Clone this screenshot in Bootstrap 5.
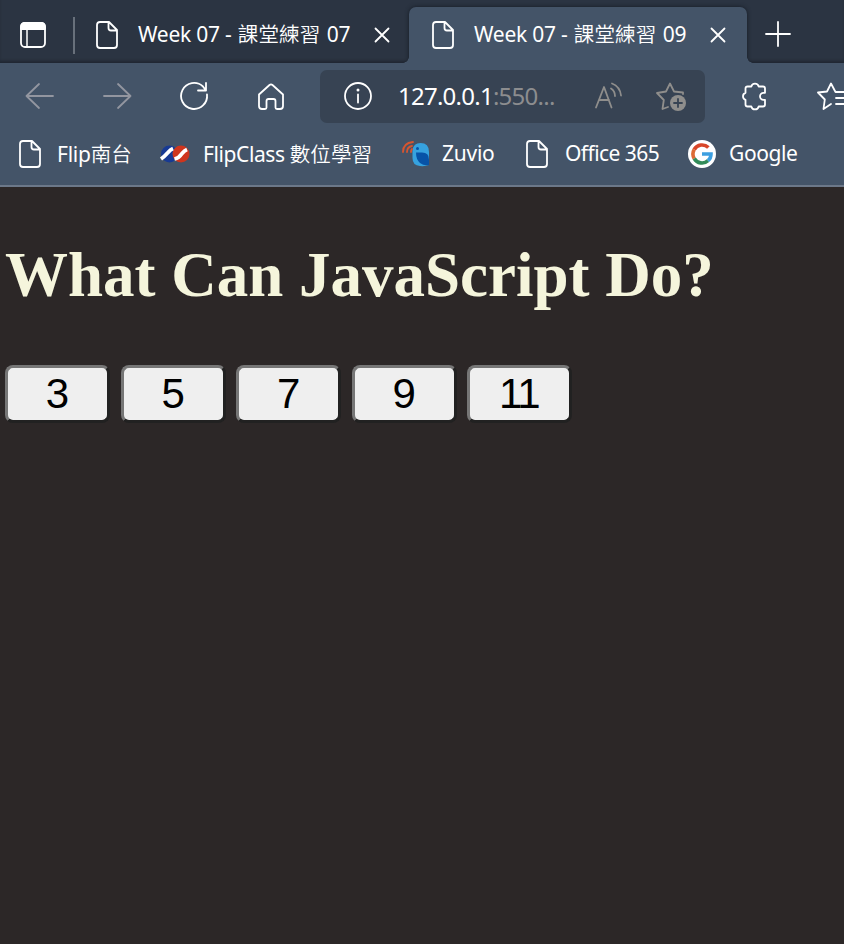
<!DOCTYPE html>
<html lang="zh-Hant">
<head>
<meta charset="utf-8">
<meta name="viewport" content="width=device-width, initial-scale=1">
<title>Week 07 - 課堂練習 09</title>
<link href="https://cdn.jsdelivr.net/npm/bootstrap@5.3.0/dist/css/bootstrap.min.css" rel="stylesheet">
<style>
body{background:#2c2727;color:#fff;font-family:"Noto Sans","Noto Sans CJK TC",sans-serif;height:944px;overflow:hidden}
svg{display:block;flex:none;fill:none;stroke:#fff;stroke-width:1.8;stroke-linecap:round;stroke-linejoin:round;overflow:visible}
.tabstrip{height:63px;background:#2b3442;box-shadow:inset 0 -3px 3px -1px #1f2631}
.tab-lead{width:73px}
.tab-first{width:336px;height:56px;padding-left:21px;border-left:2px solid transparent;border-image:linear-gradient(transparent 11px,#68707b 11px 46px,transparent 46px) 1}
.tab-live{position:relative;width:338px;height:56px;background:#445468;border-radius:7px 7px 0 0;padding-left:22px;box-shadow:0 0 4px #151b24;clip-path:inset(-6px -8px 0 -8px)}
.tab-live::before,.tab-live::after{content:"";position:absolute;bottom:0;width:6px;height:6px}
.tab-live::before{left:-6px;background:radial-gradient(circle at 0 0,transparent 5.500px,#445468 6px)}
.tab-live::after{right:-6px;background:radial-gradient(circle at 100% 0,transparent 5.500px,#445468 6px)}
.txt{white-space:nowrap;line-height:30px;font-size:21px;letter-spacing:-.25px}
.han{font-family:"Noto Sans CJK TC",sans-serif;font-weight:350;font-size:20.5px;letter-spacing:.1px}
.tab-label{width:236px;margin:-3px 0 0 20px}
.tab-label .han{margin-left:1px;margin-right:1px;letter-spacing:.2px}
.toolbar-row{height:66px;background:#445468}
.tool{width:77px}
.address{width:385px;height:53px;background:#374353;border-radius:7px;padding-left:24px;margin-left:12px}
.url{font-size:24px;letter-spacing:-.75px;width:197px;margin-left:26px}
.url-rest{color:#8c8d8f}
.dim{stroke:#8f8e8c}
.favs{height:58px;background:#445468;border-bottom:2px solid #6c7889}
.favs>svg{margin-top:-6px}
.favs>.txt{margin-top:-8px}
.fav-a{width:104px;margin-left:16px}.fav-b{width:199px;margin-left:14px;letter-spacing:-.4px}.fav-c{width:84px;margin-left:12px}.fav-d{width:123px;margin-left:17px;letter-spacing:-.55px}.fav-e{margin-left:13px;letter-spacing:-.4px}
.headline{font:bold 63px/74px "Liberation Serif",serif;color:#f5f5dc;margin:51px 0 0 5px;white-space:nowrap}
.numbers{margin:53px 0 0 5px;gap:10.6px}
.num{width:105px;height:58px;background:#efefef;border:3px solid;border-color:#767676 #212121 #212121 #767676;border-radius:8px;font:42px/1 "Liberation Sans",sans-serif;color:#000;padding:0 0 1px}
.num-tight{letter-spacing:-2px;padding-right:2px}
</style>
</head>
<body>
<svg class="d-none"><symbol id="doc" viewBox="0 0 22 28"><path d="M4 1h9l8 8v15q0 3-3 3H4q-3 0-3-3V4q0-3 3-3zM12.500 1v6q0 2.500 2.500 2.500h6"/></symbol>
<symbol id="close" viewBox="0 0 16 16"><path d="M1.500 1.500l13 13M14.500 1.500l-13 13"/></symbol></svg>

<header>
<div class="tabstrip d-flex align-items-end">
  <div class="tab-lead d-flex align-items-center h-100">
    <svg width="26" height="26" style="margin:7px 0 0 20px"><rect x="1" y="1" width="24" height="24" rx="4"/><path d="M1 7V5q0-4 4-4h16q4 0 4 4v2z" fill="#fff"/><path d="M7 7v18" stroke-width="1.500"/></svg>
  </div>
  <div class="tab-first d-flex align-items-center">
    <svg width="22" height="28"><use href="#doc"/></svg>
    <span class="txt tab-label">Week 07 - <span class="han">課堂練習</span> 07</span>
    <svg width="16" height="16"><use href="#close"/></svg>
  </div>
  <div class="tab-live d-flex align-items-center">
    <svg width="22" height="28" style="margin-left:1px"><use href="#doc"/></svg>
    <span class="txt tab-label">Week 07 - <span class="han">課堂練習</span> 09</span>
    <svg width="16" height="16"><use href="#close"/></svg>
  </div>
  <div class="d-flex align-items-center" style="height:56px;padding:0 0 2px 18px"><svg width="26" height="26"><path d="M13 1v24M1 13h24"/></svg></div>
</div>

<nav class="toolbar-row d-flex align-items-center">
  <div class="tool" style="padding-left:25px"><svg width="29" height="26"><path d="M28 13H1.500M14 1L1.500 13 14 25" stroke="#9396a0"/></svg></div>
  <div class="tool" style="padding-left:26px"><svg width="29" height="26"><path d="M1 13h26.500M15 1l12.500 12L15 25" stroke="#9396a0"/></svg></div>
  <div class="tool" style="padding-left:26px"><svg width="28" height="28"><path d="M27 12.500A13 13 0 1 1 23 4.500l3 4M26 1v7.500h-8"/></svg></div>
  <div class="tool" style="padding-left:27px"><svg width="26" height="27"><path d="M1 11.500L11.500 2q1.500-1.300 3 0L25 11.500V23q0 3-3 3h-3q-1.500 0-1.500-1.500V18q0-2-2-2h-5q-2 0-2 2v6.500Q8.500 26 7 26H4q-3 0-3-3z"/></svg></div>
  <div class="address d-flex align-items-center">
    <svg width="28" height="28"><circle cx="14" cy="14" r="13"/><path d="M14 12.500v8"/><circle cx="14" cy="8" r="1.500" fill="#fff" stroke="none"/></svg>
    <span class="txt url">127.0.0.1<span class="url-rest">:550...</span></span>
    <svg width="28" height="26" class="dim"><path d="M1 24.500L9 4l7.500 20.500M4 17h10M16 5.500q4 2.500 4 7.500M17 .5q8 3 9 12"/></svg>
    <svg width="30" height="28" class="dim" style="margin-left:33px"><path d="M12 25l-5.500 2 1.300-9L1 11l9-1.500L14 1.500l4 8 9 1v1.500"/><circle cx="22" cy="21" r="8" fill="#8f8e8c" stroke="none"/><path d="M22 17v8M18 21h8" stroke="#374353"/></svg>
  </div>
  <svg width="26" height="28" style="margin-left:36px"><path d="M6.500 4.500h3.800a3.800 3.800 0 0 1 7.400 0H22q2 0 2 2v4.300h-1.500a3.500 3.500 0 0 0 0 7H24v4.700q0 2-2 2h-4.300a3.800 3.800 0 0 1-7.400 0H6.500q-2 0-2-2v-4.700a3.700 3.700 0 0 1 0-7V6.500q0-2 2-2z"/></svg>
  <svg width="27" height="28" style="margin-left:50px"><path d="M14 22l-7.500 5 1.300-9.500L1 10.500l9-1 4-8 4.500 8.500H27M19 16h8M19 22h8"/></svg>
</nav>

<nav class="favs d-flex align-items-center">
  <svg width="22" height="28" style="margin-left:19px"><use href="#doc"/></svg>
  <span class="txt fav-a">Flip<span class="han">南台</span></span>
  <svg width="28" height="18"><g stroke="none"><circle cx="8.500" cy="9" r="8.500" fill="#173a94"/><circle cx="20" cy="9" r="8.500" fill="#cf351d"/></g><path d="M0 14Q3 12 7 7.500 9.500 4.500 12 3.500M13.500 14Q18 13 21 8.500 23.500 5.500 26 4.500" stroke-width="3.800" stroke-linecap="butt"/></svg>
  <span class="txt fav-b">FlipClass <span class="han">數位學習</span></span>
  <svg width="28" height="26"><g stroke="none"><path d="M10.500 9q1-7 8-7 8.500 0 8.500 9v13q-4 1.500-9 1-7.500-.5-7.500-8z" fill="#36a2df"/><path d="M14 11.500h6q7 0 7 7V24q-5 1-9-2-4-3.500-4-10.500z" fill="#0753a7"/><circle cx="15.500" cy="7.500" r="1.500" fill="#0753a7"/></g><path d="M1 11Q1 2 11 1M5 11q0-5 5-6M9 11q0-2 1-3" stroke="#d75530"/></svg>
  <span class="txt fav-c">Zuvio</span>
  <svg width="22" height="28"><use href="#doc"/></svg>
  <span class="txt fav-d">Office 365</span>
  <svg width="28" height="28"><circle cx="14" cy="14" r="14" fill="#fff" stroke="none"/><g stroke-width="3.600" stroke-linecap="butt"><path d="M6.200 9.500A9 9 0 0 1 20.400 7.600" stroke="#d84629"/><path d="M6.200 18.500a9 9 0 0 1 0-9" stroke="#dc6b35"/><path d="M20 20.700A9 9 0 0 1 6.200 18.500" stroke="#328b59"/><path d="M14 14h9q0 4.200-3 6.700" stroke="#3d9fe0" stroke-linejoin="miter"/></g></svg>
  <span class="txt fav-e">Google</span>
</nav>
</header>

<main>
  <h1 class="headline">What Can JavaScript Do?</h1>
  <div class="numbers d-flex">
    <button class="num">3</button><button class="num">5</button><button class="num">7</button><button class="num">9</button><button class="num num-tight">11</button>
  </div>
</main>
<script src="https://cdn.jsdelivr.net/npm/bootstrap@5.3.0/dist/js/bootstrap.bundle.min.js"></script>
</body>
</html>
